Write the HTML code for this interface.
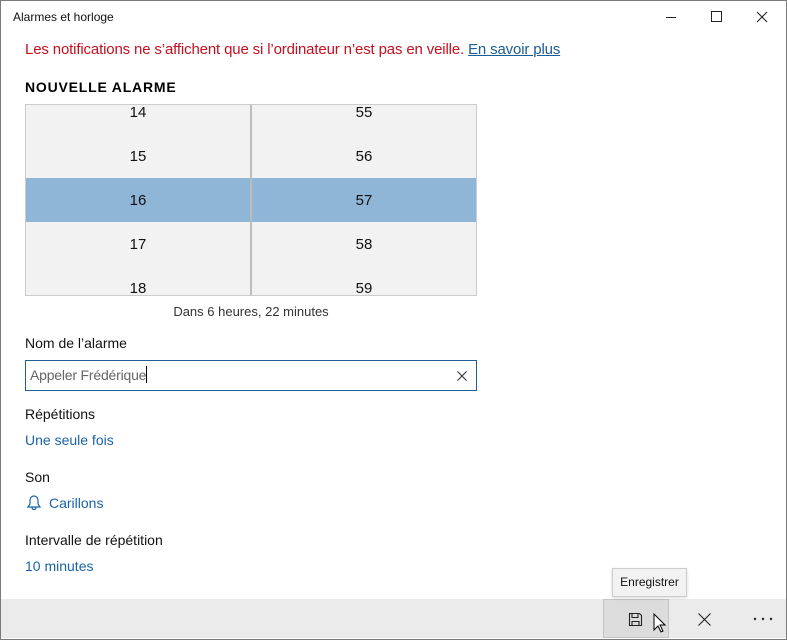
<!DOCTYPE html>
<html><head><meta charset="utf-8"><style>
*{margin:0;padding:0;box-sizing:border-box}
body{width:787px;height:640px;overflow:hidden;background:#fff;font-family:"Liberation Sans",sans-serif;position:relative;color:#000}
.win{position:absolute;left:0;top:0;width:787px;height:640px;border:1px solid #7a7a7a}
.a{position:absolute;white-space:nowrap}
.lbl{font-size:14px;color:#111}
.lnk{font-size:14px;color:#1a63a8}
.cell{position:absolute;width:224px;text-align:center;font-size:15px;color:#111}
</style></head><body>
<div class="win"></div>
<div class="a" style="left:13px;top:10px;font-size:12px;color:#111">Alarmes et horloge</div>
<div class="a" style="left:666px;top:17px;width:10px;height:1px;background:#222"></div>
<div class="a" style="left:711px;top:11px;width:11px;height:11px;border:1px solid #222"></div>
<svg class="a" style="left:756px;top:11px" width="12" height="12"><path d="M1 1L11 11M11 1L1 11" stroke="#222" stroke-width="1.1"/></svg>
<div class="a" style="left:25px;top:41px;font-size:15px;letter-spacing:-0.15px;color:#c50f1f">Les notifications ne s’affichent que si l’ordinateur n’est pas en veille. <span style="color:#1a5c96;text-decoration:underline">En savoir plus</span></div>
<div class="a" style="left:25px;top:79px;font-size:14px;font-weight:bold;letter-spacing:0.8px">NOUVELLE ALARME</div>
<div class="a" style="left:25px;top:104px;width:452px;height:192px;background:#f2f2f2;border:1px solid #ccc;overflow:hidden">
 <div class="a" style="left:0;top:73px;width:450px;height:44px;background:#8fb5d7"></div>
 <div class="a" style="left:224px;top:0;width:2px;height:192px;background:#bdbdbd"></div>
 <div class="cell" style="left:0;top:-1px">14</div><div class="cell" style="left:226px;top:-1px">55</div>
 <div class="cell" style="left:0;top:43px">15</div><div class="cell" style="left:226px;top:43px">56</div>
 <div class="cell" style="left:0;top:87px">16</div><div class="cell" style="left:226px;top:87px">57</div>
 <div class="cell" style="left:0;top:131px">17</div><div class="cell" style="left:226px;top:131px">58</div>
 <div class="cell" style="left:0;top:175px">18</div><div class="cell" style="left:226px;top:175px">59</div>
</div>
<div class="a" style="left:25px;top:304px;width:452px;text-align:center;font-size:13px;color:#333">Dans 6 heures, 22 minutes</div>
<div class="a lbl" style="left:25px;top:335px">Nom de l’alarme</div>
<div class="a" style="left:25px;top:360px;width:452px;height:31px;border:1px solid #1f5e96"></div>
<div class="a" style="left:30px;top:366px;font-size:14px;letter-spacing:-0.2px;color:#666">Appeler Frédérique<span style="display:inline-block;width:1px;height:17px;background:#000;vertical-align:-3px"></span></div>
<svg class="a" style="left:457px;top:371px" width="10" height="10"><path d="M0.5 0.5L9.5 9.5M9.5 0.5L0.5 9.5" stroke="#333" stroke-width="1.1"/></svg>
<div class="a lbl" style="left:25px;top:406px">Répétitions</div>
<div class="a lnk" style="left:25px;top:432px">Une seule fois</div>
<div class="a lbl" style="left:25px;top:469px">Son</div>
<svg class="a" style="left:26px;top:493px" width="16" height="18"><path d="M2 14h12l-2-3V7a4 4 0 0 0-8 0v4z M6 14.5a2 2 0 0 0 4 0" fill="none" stroke="#1a63a8" stroke-width="1.2"/></svg>
<div class="a lnk" style="left:49px;top:495px">Carillons</div>
<div class="a lbl" style="left:25px;top:532px">Intervalle de répétition</div>
<div class="a lnk" style="left:25px;top:558px">10 minutes</div>
<div class="a" style="left:1px;top:599px;width:785px;height:39px;background:#ebebeb"></div>
<div class="a" style="left:603px;top:599px;width:66px;height:39px;background:#dcdcdc;border:1px solid #c4c4c4"></div>
<svg class="a" style="left:628px;top:612px" width="15" height="15"><path d="M1.5 1.5h10l2 2v10h-12z M4 1.5v4h6v-4 M4 13.5v-4h7v4" fill="none" stroke="#222" stroke-width="1.1"/></svg>
<svg class="a" style="left:653px;top:613px" width="14" height="22"><path d="M1 1v16l4-4 3 6 2-1-3-6h5z" fill="#fff" stroke="#000" stroke-width="1"/></svg>
<svg class="a" style="left:698px;top:613px" width="13" height="13"><path d="M0.5 0.5L12.5 12.5M12.5 0.5L0.5 12.5" stroke="#222" stroke-width="1.1"/></svg>
<svg class="a" style="left:753px;top:617px" width="22" height="4"><circle cx="2" cy="2" r="1.2" fill="#222"/><circle cx="10" cy="2" r="1.2" fill="#222"/><circle cx="18" cy="2" r="1.2" fill="#222"/></svg>
<div class="a" style="left:612px;top:568px;width:75px;height:29px;background:#f2f2f2;border:1px solid #ccc;font-size:12px;color:#111;text-align:center;line-height:27px;box-shadow:0 1px 3px rgba(0,0,0,.15)">Enregistrer</div>
</body></html>
